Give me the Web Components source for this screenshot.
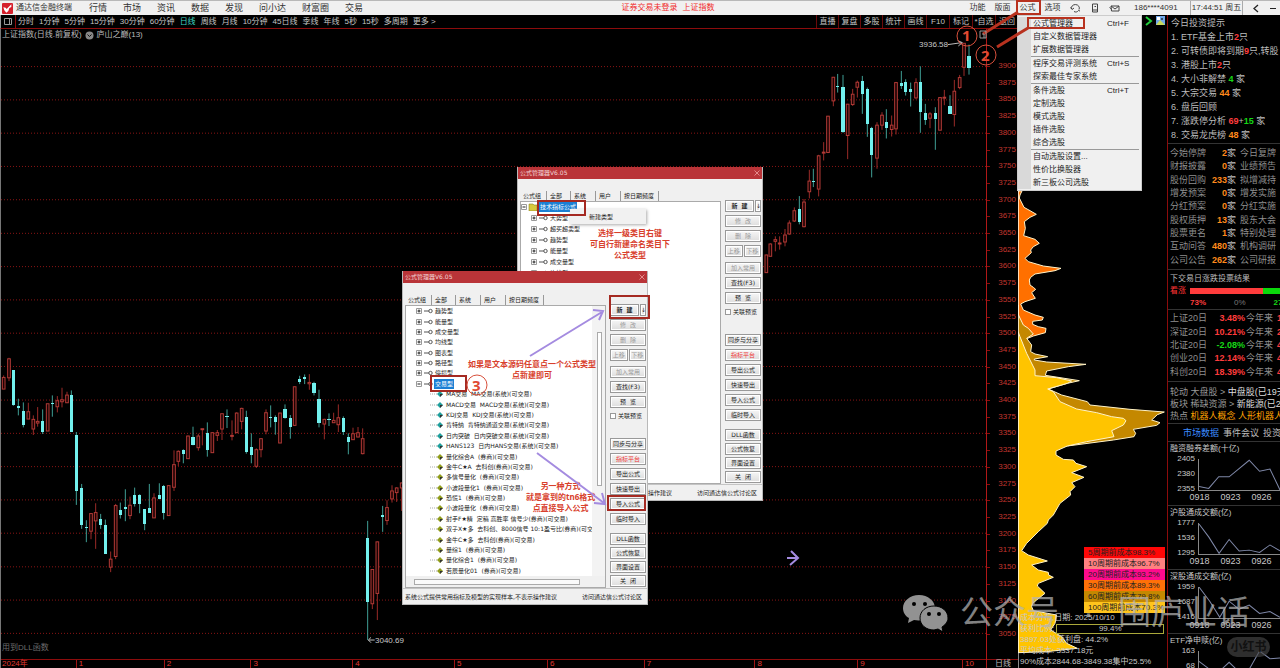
<!DOCTYPE html>
<html>
<head>
<meta charset="utf-8">
<title>通达信金融终端</title>
<style>
html,body{margin:0;background:#000}
body{font-family:"Liberation Sans","Noto Sans CJK SC",sans-serif;font-size:8px;line-height:12px;overflow:hidden}
</style>
</head>
<body>
<app-shell></app-shell>
<script>
const BASE = `*{box-sizing:border-box}p,ul,ol,h1,h2,h3,button,input,table,td{margin:0;padding:0}:host{display:block;box-sizing:border-box;white-space:nowrap}
button{font:inherit;color:inherit;background:none;border:0;line-height:inherit;cursor:pointer}a{color:inherit;text-decoration:none}svg{display:block}ul,ol{list-style:none}`;
function element(name, css, render, after) {
  customElements.define(name, class extends HTMLElement {
    connectedCallback() {
      if (this.shadowRoot) return;
      const t = document.createElement('template');
      t.innerHTML = '<style>' + BASE + css + '</style>' + render(this);
      this.attachShadow({mode: 'open'}).append(t.content.cloneNode(true));
      if (after) after(this.shadowRoot, this);
    }
  });
}

/* ---------- title bar ---------- */
element('title-bar', `
:host{height:15px;background:#f0f0f0;border-top:1px solid #b8b8b8;color:#333;flex:none}
header{display:flex;align-items:center;height:14px;line-height:14px;padding:0 0 0 2px}
.logo{width:11px;height:11px;margin-right:3px;flex:none}
b{font-weight:400;margin-right:17px}
nav{display:flex;gap:16px;font-size:9px}
.mid{flex:1;display:flex;justify-content:center;gap:5px;color:#f02b2b;padding-left:8px}
.right{display:flex;align-items:center}
.right button{width:25px}
.icons{display:flex;gap:9px;padding:0 10px 0 5px}
.acct{width:60px;padding-left:4px}
.clock{width:53px;border-left:1px solid #aaa;border-right:1px solid #aaa;text-align:center;margin-right:5px}
.right .w{width:16px;height:14px;display:grid;place-items:center}`,
() => `<header>
<svg class="logo" viewBox="0 0 33 33"><rect width="33" height="33" rx="3" fill="#d5202c"/><path d="M4 13l7 1 3 4 14-14v8l-6 3-3 9-6 5-6-7z" fill="#fff"/></svg>
<b>通达信金融终端</b>
<nav>${['行情','市场','资讯','数据','发现','问小达','财富圈','交易'].map(t=>`<button>${t}</button>`).join('')}</nav>
<div class="mid"><a href="#login">证券交易未登录</a><a href="#index">上证指数</a></div>
<div class="right"><button>功能</button><button>版面</button><button>公式</button><button>选项</button>
<span class="icons">
<svg width="11" height="10" viewBox="0 0 22 20" fill="none" stroke="#444" stroke-width="2"><path d="M3 12a8 7 0 1 1 15 1M1 9l3 4 4-3M8 17c3 2 7 1 9-2l3 1"/></svg>
<svg width="10" height="10" viewBox="0 0 20 20" fill="none" stroke="#444" stroke-width="2"><path d="M5 2h10v16H5zM5 14h10M9 7h3"/></svg>
<svg width="11" height="10" viewBox="0 0 22 20" fill="none" stroke="#444" stroke-width="2"><path d="M4 6h16v10H5zM4 6l8 6 8-6M1 9l4 3"/></svg></span>
<span class="acct">186****4091</span><span class="clock">17:44:51 周五</span>
<button class="w" aria-label="返回"><svg width="6" height="9" viewBox="0 0 6 9"><path d="M5 1L1 4.500L5 8" fill="none" stroke="#222" stroke-width="1.300"/></svg></button>
<button class="w" aria-label="最小化"><svg width="7" height="9"><path d="M1 4.500h6" stroke="#222"/></svg></button></div></header>`);

/* ---------- period toolbar ---------- */
element('period-toolbar', `
:host{height:14px;flex:none;border-bottom:1px solid #8c0c0c;color:#c4c4c4;border-left:1px solid #999}
div{display:flex;line-height:13px;height:13px}
.ico{width:15px;border-right:1px solid #8c0c0c;display:grid;place-items:center}
.p{display:flex;flex:1;gap:5px;padding-left:2px}
.p .on{color:#3fd9c4}
.f button{width:22px;border-left:1px solid #6a0a0a;text-align:center}
.f button:nth-child(n+6){width:23px}`,
() => `<div><span class="ico"><svg width="8" height="7"><path d="M.5.5h7v6h-7zM5.500 1v5" fill="none" stroke="#999"/></svg></span>
<span class="p">${['分时','1分钟','5分钟','15分钟','30分钟','60分钟','日线','周线','月线','10分钟','45日线','季线','年线','5秒','15秒','多周期','更多 >'].map(t=>`<button class="${t==='日线'?'on':''}">${t}</button>`).join('')}</span>
<div class="f">${['直播','复盘','多股','统计','画线','F10','标记','*自选','返回'].map(t=>`<button>${t}</button>`).join('')}</div></div>`);

/* ---------- candles: x, high, body top, body bottom, low; c marks a falling day ---------- */
const EARLY = `8 108 114 149 149,24 55 58 115 125,37 93 93 197 199c,52 178 201 206 228c,67 189 216 258 264c,82 190 217 239 239,97 228 240 269 287,110 203 246 251 262,125 210 246 279 284c,140 193 193 275 275,154 168 190 193 232c,169 170 184 202 219,183 145 181 187 204,198 157 167 190 190,211 153 167 278 278c,226 278 286 456 497c,242 434 447 557 569c,256 543 564 567 609c,270 522 523 576 600,284 492 520 545 629,299 524 539 558 569c,313 541 558 644 644c,329 637 660 684 699,344 494 499 652 660,358 490 513 527 538c,373 450 503 508 546c,387 472 498 529 540,401 445 468 493 502c,416 465 467 494 522c,431 510 510 555 573c,445 434 507 521 521c,459 462 476 536 536,475 432 468 479 480c,488 437 441 521 541c,503 438 439 529 530,519 333 376 444 455,532 333 336 366 380,547 330 333 345 372c,561 289 290 358 358,576 262 293 316 318c,592 283 290 325 334,604 268 268 271 318,619 249 282 331 352c,634 278 280 340 340,649 272 280 288 305,663 222 223 269 302,678 210 231 234 266c,693 243 288 290 303,707 219 221 280 280,722 205 207 246 270,736 214 232 339 343c,751 282 324 347 372c,766 327 331 381 386,780 297 298 331 354,795 210 220 275 285,809 198 234 237 264c,823 228 234 247 286c,837 220 221 311 311,852 195 210 236 238c,868 227 237 262 298c,881 141 142 258 260,896 109 118 129 134c,911 105 112 119 134c,925 104 129 133 151,939 127 130 161 168c,954 151 178 251 264c,970 238 240 254 300,984 222 240 243 260c,998 220 243 250 250,1012 195 235 256 278,1027 231 237 279 287c,1042 282 293 308 345c,1056 265 283 301 302,1071 263 280 293 294,1085 267 298 343 345,1100 545 595 788 903c,1114 690 691 794 810,1129 607 608 763 843,1145 500 527 532 578c,1158 483 505 544 557,1173 438 455 479 490,1187 444 446 460 488,1202 430 431 446 515`;
const LATE = `76 675 676 729 729,88 641 643 680 680,103 620 630 635 665,116 620 640 642 660,132 598 616 637 650,145 572 580 613 615,160 533 543 574 577,175 499 538 576 584c,189 508 517 591 593,205 420 454 486 506,217 417 453 456 472c,233 375 378 478 500,248 337 367 370 392,261 258 259 368 370,277 141 142 213 229,290 132 167 170 188c,306 135 170 307 309c,320 222 223 317 388,335 177 193 224 228,349 152 157 172 203,364 138 153 191 252c,379 173 178 281 321c,392 291 293 377 443c,408 277 286 385 417,423 247 256 286 300,436 238 277 293 326c,452 257 286 299 320,465 156 158 297 314,481 123 158 167 177c,494 148 157 187 197c,509 158 178 185 230c,525 145 158 204 208,538 109 157 246 309c,553 222 249 269 285c,567 247 252 265 295,583 232 249 266 360c,597 202 203 301 302,610 180 202 205 226,627 196 228 251 252c,640 150 184 254 290,656 135 143 173 178,669 40 40 112 138,684 44 78 114 134c`;
const candles = s => s.split(',').map(r => {
  const down = r.endsWith('c'), [x,h,t,b,l] = r.replace('c','').split(' ').map(Number);
  const bh = Math.max(b - t, 3);
  return down
    ? `<path d="M${x} ${h}V${l}" stroke="#3f9f96" stroke-width="3"/><rect x="${x-5}" y="${t}" width="10" height="${bh}" fill="#72f0ee"/>`
    : `<path d="M${x} ${h}V${t}M${x} ${b}V${l}" stroke="#9c2b28" stroke-width="3"/><rect x="${x-4}" y="${t}" width="8" height="${bh}" fill="#1c0303" stroke="#b23a36" stroke-width="3"/>`;
}).join('');

element('kline-chart', `
:host{flex:1;min-width:0;display:flex;flex-direction:column;position:relative;border-left:1px solid #777}
.plot{flex:1;min-height:0;width:100%}
h1{position:absolute;left:1px;top:0;font-size:8px;font-weight:400;line-height:12px;color:#bbb;display:flex;align-items:center;gap:3px}
.dll{position:absolute;left:1px;bottom:14px;color:#6c6c6c}
.hi,.lo{position:absolute;color:#c8c8c8;line-height:10px}
.hi{right:38px;top:11px}.lo{left:374px;bottom:22px}
.months{display:grid;grid-template-columns:75fr 88fr 87fr 102fr 102fr 93fr 97fr 111fr 103fr 105fr 24fr;height:9px;border-top:1px solid #8c0c0c;color:#e03a32;line-height:8px}
.months span{border-left:1px solid #a01414;padding-left:2px;height:8px}
.months span:first-child{border:0;padding-left:1px}`,
() => `<svg class="plot" viewBox="0 87 2955 1893" preserveAspectRatio="none" shape-rendering="crispEdges">
${Array.from({length:18},(_,i)=>`<path d="M0 ${Math.round(199.5+i*100.2)}H2955" stroke="#8a1414" stroke-width="3" stroke-dasharray="3 6"/>`).join('')}
<g transform="translate(0 1020)">${candles(EARLY)}</g><g transform="translate(2220 90)">${candles(LATE)}</g>
<path d="M2840 134L2882 128M2870 122l14 6l-12 10" stroke="#bbb" stroke-width="3" fill="none"/>
<path d="M1103 1923h18M1110 1915l-8 8l8 8" stroke="#bbb" stroke-width="3" fill="none"/></svg>
<h1>上证指数(日线.前复权) <svg width="9" height="9" viewBox="0 0 9 9"><circle cx="4.500" cy="4.500" r="4" fill="#888"/><path d="M2.500 3.500l2 2 2-2" stroke="#111" fill="none"/></svg> 庐山之巅(13)</h1>
<span class="hi">3936.58</span><span class="lo">3040.69</span><span class="dll">用到DLL函数</span>
<div class="months">${['2024年',1,2,3,4,5,6,7,8,9,10].map(t=>`<span>${t}</span>`).join('')}</div>`);

element('price-axis', `
:host{width:32px;flex:none;border-left:1px solid #b01818;color:#c2362f;display:flex;flex-direction:column}
ol{flex:1;display:flex;flex-direction:column;justify-content:space-between;padding:32px 2px 20px 0;text-align:right;line-height:10px}
li{position:relative;height:10px}
li::before{content:"";position:absolute;left:0;top:5px;width:3px;height:1px;background:#8c0c0c}
p{height:9px;border-top:1px solid #8c0c0c;line-height:8px;padding-left:8px;color:#bbb}`,
() => `<ol>${Array.from({length:35},(_,i)=>`<li>${3900-i*25}</li>`).join('')}</ol><p>日线</p>`);

/* ---------- cost distribution ---------- */
const lower = [[580,0],[588,10],[620,20],[575,38],[612,52],[575,68],[585,80],[570,95],[572,105],[540,130],[520,165],[505,180],[502,190],[475,215],[440,250],[425,272],[445,285],[502,303],[455,315],[475,330],[505,337],[506,345],[520,352],[475,370],[472,378],[495,400],[470,420],[458,430],[455,440],[460,452],[530,465],[525,490],[512,510],[545,530],[560,550],[592,565],[500,575],[415,578]].map(([x,y])=>`${x-300} ${y+810}`).join('L');
element('chip-panel', `
:host{width:150px;flex:none;position:relative;border-right:1px solid #8c0c0c}
.dist{position:absolute;inset:0;width:100%;height:100%}
.tools{position:absolute;left:127px;top:1px;display:flex;gap:3px}
.ages{position:absolute;right:2px;bottom:55px;width:81px;color:#222;line-height:11px}
.ages li{padding-left:4px}
.facts{position:absolute;left:2px;right:0;bottom:0;color:#c9c9c9;line-height:10px}
.facts p{height:11px}
.ratio{display:flex;padding-right:3px}
.ratio .bar{flex:1;height:10px;border:1px solid #aaa83a;text-align:center;line-height:8px}`,
() => `<svg class="dist" viewBox="114 -525 447 1959" preserveAspectRatio="none">
<g stroke="#fff3c8" stroke-width="3">
<path fill="#ff7000" d="M114 3H126L120 15L118 24L132 52L150 62L169 73L150 82L133 95L136 115L131 137L165 148L178 160L160 170L152 180L154 188L135 205L145 215L190 228L243 235L225 242L165 252L152 262L148 270L150 285L160 292L167 298L155 308L166 325L135 335L122 342L130 360L165 375L190 382L187 390L158 394L158 403L175 410L198 415L196 428L160 438L138 447V470H114Z"/>
<path fill="#c48800" d="M114 345V372L130 405L145 415L160 432L140 445L155 465L152 485L165 492L203 500L163 507V510L200 516L318 523L265 530L200 543L196 556L298 572L262 580L205 597L245 615L322 635L330 645L450 658L553 666L532 674L515 690L540 698L530 706L460 718L467 730L462 740L400 750L262 768H114Z"/>
<path fill="#ffc400" d="M114 425L120 440L140 490L165 540L165 557L230 563L275 573L262 580L203 597L220 605L240 635L290 657L350 668L395 680L430 685L438 692L430 705L395 722L402 740L320 755L262 768L228 783L228 795L250 808L280 810L${lower}L114 1388Z"/></g>
<path d="M115 0V1434" stroke="#fff" stroke-width="2"/></svg>
<span class="tools"><svg width="8" height="10" viewBox="0 0 8 10"><path d="M1 1l5 4-5 4" stroke="#22cf3c" stroke-width="2" fill="none"/></svg><svg width="9" height="9" viewBox="0 0 9 9"><rect width="9" height="9" fill="#72a8e8"/><path d="M1 1h3v3h-3z" fill="#fff"/><path d="M0 9l4-5 5 5z" fill="#c9d95a"/><circle cx="6" cy="3" r="1" fill="#234"/></svg></span>
<ul class="ages">${[['#ff0606','5周期前成本98.3%'],['#ff8080','10周期前成本96.7%'],['#ff0a8c','20周期前成本93.2%'],['#ff7008','30周期前成本89.3%'],['#c48800','60周期前成本79.8%'],['#ffc41c','100周期前成本70.3%']].map(([c,t])=>`<li style="background:${c}">${t}</li>`).join('')}</ul>
<div class="facts"><p>成本分布,日期: 2025/10/10</p><p class="ratio">获利比例:&nbsp;<span class="bar">99.4%</span></p><p>3897.03处获利盘: 44.2%</p><p>平均成本: 3337.18元</p><p>90%成本2844.68-3849.38集中25.5%</p></div>`);

/* ---------- right information column ---------- */
element('mini-chart', `
:host{height:64px;border-top:1px solid #333;color:#c8c8c8;overflow:hidden;flex:none}
h3{font-weight:400;font-size:8px;line-height:12px;height:12px;margin-top:1px;padding-left:2px}
.g{display:grid;grid-template-columns:27px 1fr;column-gap:3px;height:36px}
.y{display:flex;flex-direction:column;justify-content:space-between;text-align:right;line-height:8px;height:38px;font-size:8px}
svg{width:100%;height:32px;margin-top:4px;border-left:1px solid #888;border-bottom:1px solid #888}
.x{display:flex;padding:1px 0 0 16px;line-height:10px}.x span{width:31px;flex:none;text-align:center}`,
h => `<h3>${h.getAttribute('heading')}</h3><div class="g"><div class="y">${h.getAttribute('scale').split(' ').map(v=>`<span>${v}</span>`).join('')}</div>
<svg viewBox="0 0 242 96" preserveAspectRatio="none"><polyline points="${h.getAttribute('points')}" fill="none" stroke="#7f88a8" stroke-width="3"/></svg></div><div class="x"><span>0918</span><span>0923</span><span>0926</span></div>`);

const stats = [['今始停牌',2,'今日复牌'],['财报披露',0,'业绩预告'],['股份回购',233,'拟增减持'],['增发预案',0,'增发实施'],['分红预案',0,'分红实施'],['股权质押',13,'股东大会'],['股票更名',1,'特别处理'],['互动问答',480,'机构调研'],['公司公告',262,'公司研报']];
const gains = [['上证','3.48%','1'],['深证','10.21%','2'],['北证','-2.08%','4'],['创业','12.14%','4'],['科创','18.39%','4']];
element('info-panel', `
:host{width:112px;flex:none;color:#bdbdbd;font-size:9px;overflow:hidden;display:flex;flex-direction:column}
section{border-bottom:1px solid #333;flex:none;padding-left:2px}
.tips{height:129px;line-height:14px;padding-top:1px}.tips li{padding-left:1px}h2{font-size:9px;font-weight:400;padding-left:1px}
b{color:#ff8a1c}.r{color:#ff3c3c}.g{color:#16d816}
.stats{height:126px;padding-top:3px;padding-bottom:2px}
table{border-collapse:collapse;table-layout:fixed;width:140px;height:100%;color:#8e8e8e}
td{height:13px;line-height:13px}
.n{text-align:right;font-weight:700;color:#ff8a1c;width:20px}.k{width:37px}.u{width:13px;color:#bbb}
.vote{height:40px;font-size:8px;line-height:12px;padding-top:3px}
.bar{display:grid;grid-template-columns:20px 73px 27px;height:12px;align-items:center}
.bar i{height:6px;background:#ff3c3c}.bar i+i{background:#0bd80b}.bar span{color:#f33}
.pct{display:flex;padding-left:20px;font-weight:700;gap:28px;line-height:11px}
.zero{font-weight:400;color:#777}
.gains{height:72px;padding:2px 0 2px 2px}
.gains .k{width:37px}.gains .n{width:38px;color:#ff3c3c}.gains .n.g{color:#16d816}.gains .u{width:32px;color:#8e8e8e;padding-left:1px}.gains .t{color:#ff3c3c;font-weight:700}
.hot{height:42px;line-height:12px;padding-top:4px;color:#9a9a9a}.hot em{font-style:normal;color:#ddd}.hot strong{font-weight:400;color:#ffa000}
.tabs{height:17px;line-height:16px;display:flex;gap:4px;padding-left:15px;border:0}.tabs .on{color:#3c8cff}`,
() => `<section class="tips"><h2>今日投资提示</h2><ol><li>1. ETF基金上市<b class="r">2</b>只</li><li>2. 可转债即将到期<b class="r">9</b>只,转股</li><li>3. 港股上市<b class="r">2</b>只</li><li>4. 大小非解禁 <b class="g">4</b> 家</li><li>5. 大宗交易 <b>44</b> 家</li><li>6. 盘后回顾</li><li>7. 涨跌停分析 <b class="r">69</b>+<b class="g">15</b> 家</li><li>8. 交易龙虎榜 <b>48</b> 家</li></ol></section>
<section class="stats"><table>${stats.map(([a,n,c])=>`<tr><td class="k">${a}</td><td class="n">${n}</td><td class="u">家</td><td>${c}</td></tr>`).join('')}</table></section>
<section class="vote"><p>下交易日涨跌投票结果</p><div class="bar"><span>看涨</span><i></i><i></i></div><p class="pct"><span class="r">73%</span><span class="zero">0%</span><span class="g">27%</span></p></section>
<section class="gains"><table>${gains.map(([a,n,t])=>`<tr><td class="k">${a}20日</td><td class="n ${n[0]==='-'?'g':''}">${n}</td><td class="u">今年来</td><td class="t">${t}</td></tr>`).join('')}</table></section>
<section class="hot"><p>轮动 大盘股 &gt; <em>中盘股(已19天)</em></p><p>板块 稀缺资源 &gt; <em>新能源(已2天)</em></p><p>热点 <strong>机器人概念 人形机器人</strong></p></section>
<section class="tabs"><button class="on">市场数据</button><button>事件会议</button><button>投资日历</button></section>
<mini-chart heading="融资融券差额(十亿)" scale="2405 2380 2355" points="0,85 29,91 59,55 90,55 150,4 181,38 212,31 242,96"></mini-chart>
<mini-chart heading="沪股通成交额(亿)" scale="1777 1536 1295" points="0,3 29,43 60,94 90,51 120,87 150,84 181,91 212,68 242,86"></mini-chart>
<mini-chart heading="深股通成交额(亿)" scale="1959 1687 1416" points="0,0 32,44 62,94 90,44 120,69 150,56 181,82 212,76 242,94"></mini-chart>
<mini-chart heading="ETF净申赎(亿)" scale="163 68 -27" points="0,32 32,57 62,62 90,35 117,62 147,62 181,0 212,24 242,22"></mini-chart>`);

/* ---------- drop-down menu ---------- */
element('formula-menu', `
:host{position:absolute;right:138px;top:15px;width:125px;background:#f0f0f0;border:1px solid #ccc;color:#222;padding:1px 2px 1px 0}
.strip{border-left:13px solid #d9d9d9}
li{display:flex;padding-left:2px;height:13px;line-height:13px}
li button{display:flex;width:100%;text-align:left}li span{width:74px}
li.cut{height:14px;border-top:1px solid #999}`,
() => `<ul class="strip">${[['公式管理器','Ctrl+F'],['自定义数据管理器'],['扩展数据管理器'],['程序交易评测系统','Ctrl+S',1],['探索最佳专家系统'],['条件选股','Ctrl+T',1],['定制选股'],['模式选股'],['插件选股'],['综合选股'],['自动选股设置...','',1],['性价比换股器'],['新三板公司选股']].map(([t,k,c])=>`<li class="${c?'cut':''}"><button><span>${t}</span>${k||''}</button></li>`).join('')}</ul>`);

/* ---------- formula manager window ---------- */
element('tree-row', `
:host{display:flex;align-items:center;line-height:8px;color:#1c1c1c;min-height:0;white-space:pre}
:host([kind=group]){padding-left:10px;gap:1px}
:host([kind=root]){gap:1px}
:host([kind=leaf]){padding-left:24px;gap:2px}
span{padding:0 1px}
:host([selected]) span{background:#1a7fd4;color:#fff;padding:1px 1px}
svg{flex:none}`,
h => {
  const k = h.getAttribute('kind'), open = h.hasAttribute('selected');
  const box = `<svg width="6" height="6" viewBox="0 0 6 6"><path d="M.5.5h5v5h-5z" fill="#fff" stroke="#999"/><path d="M1.500 3h3${open?'':'M3 1.500v3'}" stroke="#222"/></svg>`;
  const key = `<svg width="10" height="6" viewBox="0 0 10 6"><path d="M1 3h5" stroke="#555"/><circle cx="7.500" cy="3" r="1.700" fill="#fff" stroke="#555"/></svg>`;
  const dir = `<svg width="10" height="8" viewBox="0 0 10 8"><path d="M1 1h4l1 1h3v6H1z" fill="#d8c93c" stroke="#8c8428" stroke-width=".6"/></svg>`;
  const c = h.hasAttribute('teal') ? '#1f9f9c' : '#8f9c1a';
  const leaf = `<svg width="13" height="6" viewBox="0 0 13 6"><path d="M0 3h8" stroke="#aaa" stroke-dasharray="1 1"/><path d="M10 0l3 3-3 3-3-3z" fill="${c}"/><path d="M10 3h3l-3 3z" fill="#333"/></svg>`;
  return (k==='leaf' ? leaf : k==='root' ? box+dir : box+key) + '<span><slot></slot></span>';
});

element('formula-dialog', `
:host{position:absolute;width:246px;height:334px;background:#f0f0f0;border:1px solid #b9b9b9;border-top:0;font:6px/8px "DejaVu Sans","Noto Sans CJK SC",sans-serif;color:#1c1c1c}
.win{display:flex;flex-direction:column;height:100%}
header{height:12px;background:#b93438;color:#f3d5d5;display:flex;justify-content:space-between;align-items:center;padding:0 2px;flex:none}
.tabs{display:flex;padding-left:2px;height:22px;align-items:flex-end;flex:none}
.tabs button{height:10px;border-right:1px solid #999;text-align:left;padding-left:3px}
.main{flex:1;display:flex;min-height:0;padding-left:2px}
.side{display:flex;flex-direction:column;gap:3px;width:36px;margin:-1px 0 0 4px}
.side button{height:12px;flex:none;border:1px solid #999;background:linear-gradient(#f6f6f6,#ddd);line-height:10px;text-align:center;box-shadow:inset 0 0 0 1px #fff}
.side .off{color:#999}.side .red{color:#f03434}
.side .two{display:flex;gap:1px}.side .two button{flex:1;min-width:0}.side .new button:first-child{flex:0 0 29px}
label{display:flex;align-items:center;gap:2px;height:10px}
input{appearance:none;width:6px;height:6px;border:1px solid #999;background:#fff;flex:none}
.s1{margin-top:2px}.side .s2{margin-top:14px}.s3{margin-top:5px;display:flex;flex-direction:column;gap:2px}
.tree{width:201px;border:1px solid #aaa;background:#fff;display:flex;flex-direction:column;min-height:0}
.row{display:flex;flex:1;min-height:0}
.rows{flex:1;min-width:0;display:grid;grid-auto-rows:10px;row-gap:1px;overflow:hidden;align-content:start}
:host([scroll]) .rows{grid-auto-rows:1fr;row-gap:0;align-content:stretch}
.v{display:none;width:13px;background:#f3f3f3;padding:26px 3px 90px 5px}
.v i{display:block;height:100%;border:1px solid #aaa;background:#fff}
.h{display:none;height:11px;background:#f0f0f0;padding:3px 25px 2px 8px}
.h i{display:block;height:6px;border:1px solid #aaa;background:#fafafa}
:host([scroll]) .v,:host([scroll]) .h{display:block}
footer{height:16px;flex:none;display:flex;justify-content:space-between;align-items:center;padding:0 5px 0 2px;border-top:1px solid #c4c4c4}`,
() => `<div class="win"><header><span>公式管理器V6.05</span><svg width="6" height="6"><path d="M.5.5l5 5M5.500.5l-5 5" stroke="#e48a8a"/></svg></header>
<div class="tabs"><button style="width:27px">公式组</button><button style="width:24px">全部</button><button style="width:25px">系统</button><button style="width:25px">用户</button><button style="width:38px">按日期频度</button></div>
<div class="main"><div class="tree"><div class="row"><div class="rows"><slot></slot></div><div class="v"><i></i></div></div><div class="h"><i></i></div></div>
<div class="side"><div class="two new"><button><b>新 &nbsp;建</b></button><button>↓</button></div><button class="off">修 &nbsp;改</button><button class="off">删 &nbsp;除</button><div class="two off"><button>上移</button><button>下移</button></div>
<button class="off s1">加入常用</button><button>查找(F3)</button><button>预 &nbsp;览</button><label><input type="checkbox">关联预览</label>
<button class="s2">同步与分享</button><button class="red">指标平台</button><button>导出公式</button><button>快速导出</button><button>导入公式</button><button>临时导入</button>
<div class="s3"><button>DLL函数</button><button>公式恢复</button><button>界面设置</button><button>关 &nbsp;闭</button></div></div></div>
<footer><span>系统公式提供常用指标及模型的实现样本,不表示操作建议</span><a href="#forum">访问通达信公式讨论区</a></footer></div>`);

/* ---------- hand-drawn notes over the windows ---------- */
element('note-text', `
:host{position:absolute;color:#d8402c;font-weight:700;text-align:center;line-height:11px;white-space:pre;font-family:"Noto Sans","Noto Sans CJK SC",sans-serif}`,
() => '<slot></slot>');

element('note-marks', `
:host{position:absolute;top:0;pointer-events:none}
text{font:700 15px "Noto Sans",sans-serif;fill:#e04a32}`,
h => h.hasAttribute('menu')
? `<svg width="330" height="70" fill="none" stroke="#b8321f"><rect x="67" y="1" width="23" height="13" stroke-width="2"/><rect x="78" y="18" width="56" height="10" stroke-width="2"/>
<path d="M68 12L33 34M78 28L47 47" stroke-width="3"/><path d="M30 31h6v7h-6zM32 34h2v4" stroke="#999"/><circle cx="17" cy="36" r="10" stroke="#d8503c"/><circle cx="36" cy="55" r="10" stroke="#d8503c"/>
<text x="12" y="41" stroke="none">1</text><text x="31" y="61" stroke="none">2</text></svg>`
: `<svg width="820" height="640" fill="none" stroke="#a52a22" stroke-width="2"><path d="M538 201h47v14h-47zM431 376h35v15h-35zM610 296h39v22h-39zM608 496h37v14h-37z"/>
<circle cx="477" cy="385" r="10" stroke="#d8503c" stroke-width="1"/><text x="472" y="391" stroke="none">3</text>
<g stroke="#a48be0" stroke-width="2"><path d="M530 356L602 312M593 310l10 1-4 9M537 453L604 503M602 493l3 11-11-1"/><path d="M787 558h10M791 551l7 7-8 7"/></g></svg>`);

element('water-mark', `
:host{position:absolute;right:30px;bottom:30px;display:flex;align-items:center;gap:24px;font-size:33px;line-height:50px;color:rgba(180,180,180,.72);pointer-events:none}
svg{margin-right:-12px}
.pill{position:absolute;right:-20px;bottom:-19px;width:43px;height:20px;border-radius:10px;background:rgba(70,70,70,.65);color:#111;font-size:12px;line-height:20px;text-align:center;font-weight:700}`,
() => `<svg width="45" height="36" viewBox="0 0 45 36"><path d="M16 0C7 0 0 6 0 13c0 4 2 8 6 10l-1 5 6-3c9 2 20-2 21-12C32 6 25 0 16 0z" fill="#929292"/><path d="M31 11c-8 0-14 5-14 12s6 12 14 12l4-1 5 3-1-5c3-2 6-5 6-9 0-7-6-12-14-12z" fill="#929292" stroke="#000"/><g fill="#000"><circle cx="11" cy="9" r="2"/><circle cx="22" cy="9" r="2"/><circle cx="26" cy="19" r="2"/><circle cx="36" cy="19" r="2"/></g></svg><span>公众号</span><span>·</span><span>围庐业话</span><span class="pill">小红书</span>`);

const groups = ['趋势型','能量型','成交量型','均线型','图表型','路径型','停损型'];
const leaves = ['MA交易  MA交易(系统)(可交易)','MACD交易  MACD交易(系统)(可交易)','KDJ交易  KDJ交易(系统)(可交易)','肯特纳  肯特纳通道交易(系统)(可交易)','日内突破  日内突破交易(系统)(可交易)','HANS123  日内HANS交易(系统)(可交易)','量化综合A  (券商)(可交易)','金牛C★A  去科创(券商)(可交易)','多信号量化  (券商)(可交易)','小波段量化1  (券商)(可交易)','恐慌1  (券商)(可交易)','小波段量化  (券商)(可交易)','射手F★精  定稿 高胜率 信号少(券商)(可交易)','双子X★多  去科创、8000信号 10:1盈亏比(券商)(可交','金牛C★多  去科创(券商)(可交易)','量综1  (券商)(可交易)','量化综合1  (券商)(可交易)','若辰量化01  (券商)(可交易)'];

element('app-shell', `
:host{position:relative;display:flex;flex-direction:column;height:100vh;min-height:560px;overflow:hidden;background:#000}
main{flex:1;display:flex;min-height:0}
.left{flex:1;min-width:0;display:flex;flex-direction:column}
.chart{flex:1;display:flex;min-height:0}
.back{left:517px;top:167px}.front{left:402px;top:271px}
.pop{position:absolute;left:570px;top:209px;width:76px;height:15px;background:#f1f1f1;box-shadow:1px 1px 3px #aaa;font:6px/14px "DejaVu Sans","Noto Sans CJK SC",sans-serif;text-align:left;padding-left:19px;color:#222}
.m0{left:0}.m1{right:0}
.n1{left:590px;top:227px}.n2{left:468px;top:358px}.n3{left:526px;top:480px}`,
() => `<title-bar></title-bar><main><div class="left"><period-toolbar></period-toolbar><div class="chart"><kline-chart></kline-chart><price-axis></price-axis></div></div><chip-panel></chip-panel><info-panel></info-panel></main>
<formula-dialog class="back"><tree-row kind="root" selected>技术指标公式</tree-row>${['大势型','超买超卖型','趋势型','能量型','成交量型','均线型'].map(t=>`<tree-row kind="group">${t}</tree-row>`).join('')}</formula-dialog>
<button class="pop">新建类型</button>
<formula-dialog class="front" scroll>${groups.map(t=>`<tree-row kind="group">${t}</tree-row>`).join('')}<tree-row kind="group" selected>交易型</tree-row>${leaves.map((t,i)=>`<tree-row kind="leaf" ${i<6?'teal':''}>${t}</tree-row>`).join('')}</formula-dialog>
<formula-menu></formula-menu>
<note-text class="n1">选择一级类目右键
可自行新建命名类目下
公式类型</note-text><note-text class="n2">如果是文本源码任意点一个公式类型
点新建即可</note-text><note-text class="n3">另一种方式
就是拿到的tn6格式
点直接导入公式</note-text>
<note-marks class="m0"></note-marks><note-marks class="m1" menu></note-marks><water-mark></water-mark>`);
</script>
</body>
</html>
